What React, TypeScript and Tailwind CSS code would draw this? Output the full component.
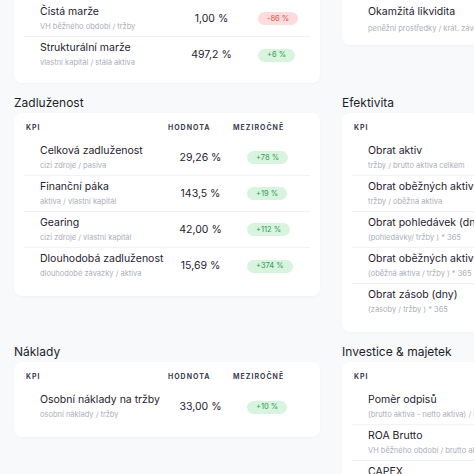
import React from "react";

type RowData = { title: string; sub: string; value: string; pill: string; neg?: boolean };

function Pill({ v, neg }: { v: string; neg?: boolean }) {
  return (
    <span
      className={
        neg
          ? "inline-flex items-center h-[13px] px-[9px] rounded-full text-[7.5px] bg-[#fcdcdc] text-[#e0504f] whitespace-nowrap"
          : "inline-flex items-center h-[13px] px-[9px] rounded-full text-[7.5px] bg-[#d8f4df] text-[#2f9a53] whitespace-nowrap"
      }
    >
      {v}
    </span>
  );
}

function Row({ r, wide }: { r: RowData; wide?: boolean }) {
  return (
    <div className="flex h-[36px] border-b border-[#f1f2f5] last:border-b-0">
      <div className={wide ? "w-[155px] shrink-0 pl-[16px] pt-[3px]" : "w-[144px] shrink-0 pl-[16px] pt-[3px]"}>
        <div className="text-[10.5px] leading-[16px] text-[#1f2230] whitespace-nowrap">{r.title}</div>
        <div className="text-[7.5px] leading-[13px] text-[#abaeb9] whitespace-nowrap">{r.sub}</div>
      </div>
      <div className="w-[65px] shrink-0 flex items-center justify-center text-[10.5px] text-[#1f2230] whitespace-nowrap">
        {r.value}
      </div>
      <div className="flex-1 flex items-center pl-[14px]">
        <Pill v={r.pill} neg={r.neg} />
      </div>
    </div>
  );
}

function Header() {
  return (
    <div className="flex h-[27px] pt-[10px] text-[7px] leading-[10px] font-bold tracking-[1px] text-[#3b3f52]">
      <div className="w-[144px] shrink-0 pl-[2px]">KPI</div>
      <div className="w-[65px] shrink-0">HODNOTA</div>
      <div className="flex-1">MEZIROČNĚ</div>
    </div>
  );
}

function Section({ title, rows }: { title: string; rows: RowData[] }) {
  return (
    <div className="flex flex-col">
      <h2 className="text-[12px] leading-[20px] text-[#1d1f2b] font-normal">{title}</h2>
      <div className="bg-white rounded-lg px-[10px] pb-3 shadow-[0_1px_3px_rgba(20,30,60,0.03)]">
        <Header />
        {rows.map((r) => (
          <Row key={r.title} r={r} />
        ))}
      </div>
    </div>
  );
}

const zadluzenost: RowData[] = [
  { title: "Celková zadluženost", sub: "cizí zdroje / pasiva", value: "29,26 %", pill: "+78 %" },
  { title: "Finanční páka", sub: "aktiva / vlastní kapitál", value: "143,5 %", pill: "+19 %" },
  { title: "Gearing", sub: "cizí zdroje / vlastní kapitál", value: "42,00 %", pill: "+112 %" },
  { title: "Dlouhodobá zadluženost", sub: "dlouhodobé závazky / aktiva", value: "15,69 %", pill: "+374 %" },
];

const efektivita: RowData[] = [
  { title: "Obrat aktiv", sub: "tržby / brutto aktiva celkem", value: "1,42", pill: "+4 %" },
  { title: "Obrat oběžných aktiv", sub: "tržby / oběžná aktiva", value: "2,10", pill: "+6 %" },
  { title: "Obrat pohledávek (dny)", sub: "(pohledávky/ tržby ) * 365", value: "48", pill: "+2 %" },
  { title: "Obrat oběžných aktiv (dny)", sub: "(oběžná aktiva / tržby ) * 365", value: "174", pill: "+3 %" },
  { title: "Obrat zásob (dny)", sub: "(zásoby / tržby ) * 365", value: "61", pill: "+5 %" },
];

const naklady: RowData[] = [
  { title: "Osobní náklady na tržby", sub: "osobní náklady / tržby", value: "33,00 %", pill: "+10 %" },
];

const investice: RowData[] = [
  { title: "Poměr odpisů", sub: "(brutto aktiva - netto aktiva) / brutto aktiva", value: "38,1 %", pill: "+3 %" },
  { title: "ROA Brutto", sub: "VH běžného období / brutto aktiva", value: "5,2 %", pill: "+8 %" },
  { title: "CAPEX", sub: "investice do dlouhodobého majetku", value: "1,2 mil.", pill: "+9 %" },
];

export default function App() {
  return (
    <div className="w-[474px] h-[474px] overflow-hidden bg-[#f8f9fb] font-['Inter',sans-serif]">
      <div className="pl-[14px] grid grid-cols-[306px_306px] gap-x-[22px] gap-y-[10px]">
        <div className="bg-white rounded-b-lg px-[10px] pt-px pb-[10px] shadow-[0_1px_3px_rgba(20,30,60,0.03)]">
          <Row wide r={{ title: "Čistá marže", sub: "VH běžného období / tržby", value: "1,00 %", pill: "-86 %", neg: true }} />
          <Row wide r={{ title: "Strukturální marže", sub: "vlastní kapitál / stálá aktiva", value: "497,2 %", pill: "+6 %" }} />
        </div>
        <div className="self-start bg-white rounded-b-lg px-[10px] pt-px pb-[8px] shadow-[0_1px_3px_rgba(20,30,60,0.03)]">
          <div className="flex h-[36px]">
            <div className="w-[155px] shrink-0 pl-[16px] pt-[3px]">
              <div className="text-[10.5px] leading-[16px] text-[#1f2230] whitespace-nowrap">Okamžitá likvidita</div>
              <div className="pt-[2px] text-[7.5px] leading-[13px] text-[#abaeb9] whitespace-nowrap">
                peněžní prostředky / krát. závazky
              </div>
            </div>
            <div className="w-[65px] shrink-0 flex items-center justify-center text-[10.5px] text-[#1f2230]">0,84</div>
            <div className="flex-1 flex items-center pl-[14px]">
              <Pill v="+12 %" />
            </div>
          </div>
        </div>

        <div className="self-start">
          <Section title="Zadluženost" rows={zadluzenost} />
        </div>
        <div className="self-start">
          <Section title="Efektivita" rows={efektivita} />
        </div>

        <div className="self-start">
          <Section title="Náklady" rows={naklady} />
        </div>
        <div className="self-start">
          <Section title="Investice & majetek" rows={investice} />
        </div>
      </div>
    </div>
  );
}
